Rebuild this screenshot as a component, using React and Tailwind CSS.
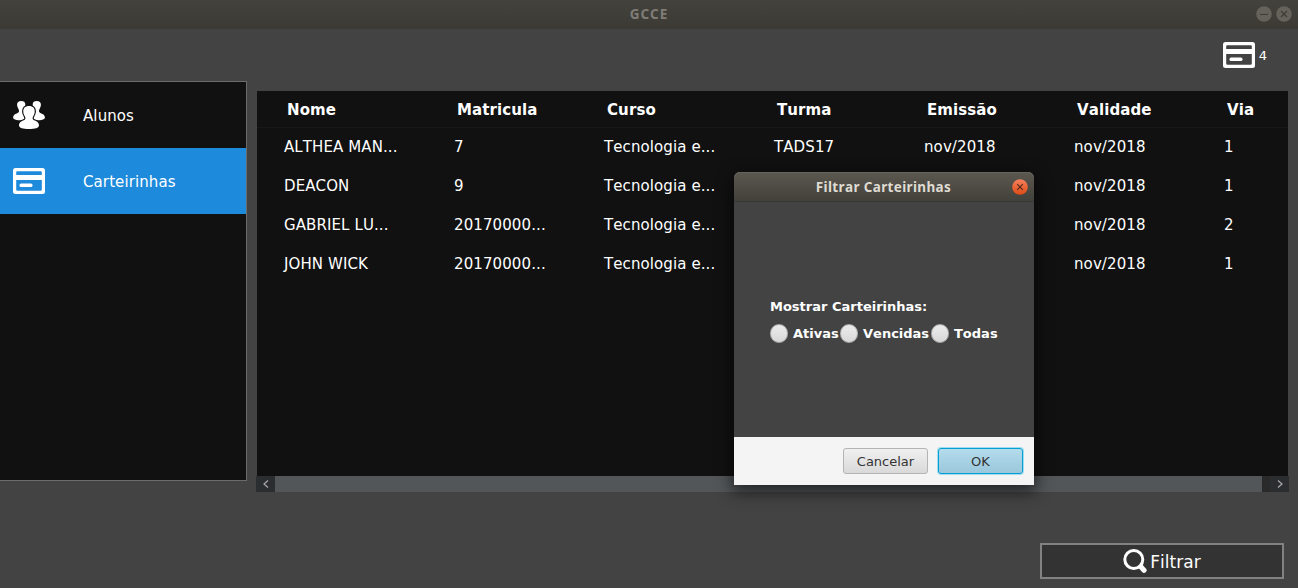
const columns = [
  { label: "Nome", width: "w-[170px]" },
  { label: "Matricula", width: "w-[150px]" },
  { label: "Curso", width: "w-[170px]" },
  { label: "Turma", width: "w-[150px]" },
  { label: "Emissão", width: "w-[150px]" },
  { label: "Validade", width: "w-[150px]" },
  { label: "Via", width: "w-[60px]" },
];

const rows = [
  ["ALTHEA MAN...", "7", "Tecnologia e...", "TADS17", "nov/2018", "nov/2018", "1"],
  ["DEACON", "9", "Tecnologia e...", "", "", "nov/2018", "1"],
  ["GABRIEL LU...", "20170000...", "Tecnologia e...", "", "", "nov/2018", "2"],
  ["JOHN WICK", "20170000...", "Tecnologia e...", "", "", "nov/2018", "1"],
];

function CardIcon() {
  return (
    <svg width="32" height="26" viewBox="0 0 32 26" className="shrink-0">
      <path
        fill="#fff"
        fillRule="evenodd"
        d="M2.5 0h27A2.5 2.5 0 0 1 32 2.5v21a2.5 2.5 0 0 1-2.5 2.5h-27A2.5 2.5 0 0 1 0 23.500v-21A2.500 2.500 0 0 1 2.500 0ZM4.200 3.300Q3.200 3.300 3.200 4.300V7H28.800V4.300Q28.800 3.300 27.800 3.300ZM3.200 12V21.500Q3.200 22.700 4.400 22.700H27.600Q28.800 22.700 28.800 21.500V12Z"
      />
      <rect x="6.500" y="15.500" width="13" height="3.500" rx="1.600" fill="#fff" />
    </svg>
  );
}

const SIDE_PERSON =
  "M8.200 0C11 0 12.600 1.300 12.300 4.300C12.200 5.500 11.900 6.300 11.400 7.200C10.800 8.400 10.800 9.600 11.800 10.600C14 12 15 13 15 15.500L13 18.500C9 19.700 3.500 19.700 0.600 17.800C-0.300 16.900 0.100 15 1.300 13.800C2.500 12.600 5.200 12.400 5.800 11C6.300 9.800 5.900 8.600 5.200 7.400C4.600 6.300 4.200 5.500 4.100 4.300C3.900 1.300 5.500 0 8.200 0Z";

const FRONT_PERSON =
  "M16 5C20 5 22 7.200 21.700 11C21.600 12.700 21 14 20.200 15.200C19.200 17 19.400 18.500 21 19.200C23.700 20.100 26 21.200 26 24.500C26 27 22 28 16 28C10 28 6 27 6 24.500C6 21.200 8.300 20.100 11 19.200C12.600 18.500 12.800 17 11.800 15.200C11 14 10.400 12.700 10.300 11C10 7.200 12 5 16 5Z";

function UsersIcon() {
  return (
    <svg width="32" height="28" viewBox="0 0 32 28" className="shrink-0" fill="#fff">
      <path d={SIDE_PERSON} />
      <path transform="matrix(-1 0 0 1 32 0)" d={SIDE_PERSON} />
      <path d={FRONT_PERSON} fill="#111" stroke="#111" strokeWidth="2.400" />
      <path d={FRONT_PERSON} />
    </svg>
  );
}

function RadioOption({ label, className }) {
  return (
    <label className={`flex items-center gap-[5px] ${className}`}>
      <span className="h-[19px] w-[18px] shrink-0 rounded-full border border-[#aaa] bg-linear-to-b from-[#ececec] to-[#d8d8d8]" />
      <span>{label}</span>
    </label>
  );
}

function FilterDialog() {
  return (
    <div className="absolute left-[734px] top-[172px] flex h-[313px] w-[300px] flex-col rounded-t-[6px] bg-[#434343] shadow-[0_5px_16px_2px_rgba(0,0,0,0.6)]">
      <div className="flex h-[30px] shrink-0 items-center rounded-t-[6px] border-b border-[#393834] bg-linear-to-b from-[#5b584f] to-[#42413b] pr-[6px] shadow-[inset_0_1px_0_#67645b]">
        <div className="flex-1 pl-[21px] pt-px text-center font-['Noto_Sans',sans-serif] text-[13.500px] font-bold tracking-[0.36px] text-[#dfdbd2]">
          Filtrar Carteirinhas
        </div>
        <svg width="16" height="16" viewBox="0 0 16 16">
          <defs>
            <linearGradient id="close" x1="0" y1="0" x2="0" y2="1">
              <stop offset="0" stopColor="#f5815d" />
              <stop offset="1" stopColor="#df4a16" />
            </linearGradient>
          </defs>
          <circle cx="8" cy="8" r="7.800" fill="url(#close)" />
          <path d="M5.200 5.200L10.800 10.800M10.800 5.200L5.200 10.800" stroke="#4a2b1e" strokeWidth="1.100" />
        </svg>
      </div>
      <div className="flex-1 pl-9 pt-[97px] text-[13px] font-bold leading-[16px] text-white">
        <div>Mostrar Carteirinhas:</div>
        <div className="mt-[9px] flex">
          <RadioOption label="Ativas" className="w-[70px]" />
          <RadioOption label="Vencidas" className="w-[91px]" />
          <RadioOption label="Todas" className="" />
        </div>
      </div>
      <div className="flex h-12 shrink-0 items-center justify-end gap-[10px] bg-[#f4f4f4] pr-[11px] text-[13px] text-[#333]">
        <button className="h-[26px] w-[85px] rounded-[3px] border border-[#b4b4b4] bg-linear-to-b from-[#f0f0f0] to-[#d9d9d9] pt-[2px]">
          Cancelar
        </button>
        <button className="h-[26px] w-[85px] rounded-[3px] border border-[#039ed3] bg-linear-to-b from-[#b3dcec] to-[#9bc7dc] pt-[2px] shadow-[0_0_0_1px_#9fdcf0]">
          OK
        </button>
      </div>
    </div>
  );
}

export default function App() {
  return (
    <div className="relative flex h-[588px] w-[1298px] flex-col overflow-hidden bg-[#434343] font-['DejaVu_Sans',sans-serif] text-[15px] text-white [font-kerning:none]">
      <header className="flex h-[29px] shrink-0 items-center bg-linear-to-b from-[#43423d] to-[#3b3a35] pr-[6px]">
        <div className="flex-1 pl-[42px] text-center font-['Noto_Sans',sans-serif] text-[13.500px] font-bold tracking-[1px] text-[#807d76]">
          GCCE
        </div>
        <svg width="36" height="16" viewBox="0 0 36 16" stroke="#3c3b37" strokeWidth="1.200" className="mb-px">
          <circle cx="8" cy="8" r="7.800" fill="#64625b" stroke="none" />
          <circle cx="28" cy="8" r="7.800" fill="#64625b" stroke="none" />
          <path d="M4 8.500H12M25 5L31 11M31 5L25 11" />
        </svg>
      </header>

      <div className="flex h-[52px] shrink-0 items-center justify-end gap-1 pr-[31px] text-[13px]">
        <CardIcon />
        <span className="pt-[2px]">4</span>
      </div>

      <div className="flex h-[411px] shrink-0">
        <nav className="h-[400px] w-[247px] shrink-0 border-y border-r border-[#6c6c6c] bg-[#111]">
          <a className="flex h-[66px] items-center gap-[38px] pl-[13px]">
            <UsersIcon />
            <span className="pt-[2px] tracking-[0.1px]">Alunos</span>
          </a>
          <a className="flex h-[66px] items-center gap-[38px] bg-[#1e8adc] pl-[13px]">
            <CardIcon />
            <span className="pt-[2px] tracking-[0.1px]">Carteirinhas</span>
          </a>
        </nav>

        <main className="ml-[9px] flex w-[1033px] flex-col pt-[10px]">
          <div className="ml-px h-[385px] w-[1031px] overflow-hidden bg-[#111] tracking-[0.1px]">
            <div className="flex h-[37px] items-center border-b border-[#181818] pl-[30px] pt-[2px] font-bold">
              {columns.map((c) => (
                <div key={c.label} className={`shrink-0 ${c.width}`}>
                  {c.label}
                </div>
              ))}
            </div>
            {rows.map((row) => (
              <div key={row[0]} className="flex h-[39px] items-center pl-[27px]">
                {row.map((cell, i) => (
                  <div key={columns[i].label} className={`shrink-0 ${columns[i].width}`}>
                    {cell}
                  </div>
                ))}
              </div>
            ))}
          </div>
          <div className="flex h-4 bg-[#2a2a2a]">
            <div className="flex w-[19px] items-center justify-center bg-[#2a2e31]">
              <svg width="6" height="8" viewBox="0 0 6 8" fill="none" stroke="#aaa" strokeWidth="1.200">
                <path d="M5 0.500L1 4L5 7.500" />
              </svg>
            </div>
            <div className="w-[987px] bg-[#525659]" />
            <div className="ml-2 flex w-[19px] items-center justify-center bg-[#2a2e31]">
              <svg width="6" height="8" viewBox="0 0 6 8" fill="none" stroke="#aaa" strokeWidth="1.200">
                <path d="M1 0.500L5 4L1 7.500" />
              </svg>
            </div>
          </div>
        </main>
      </div>

      <footer className="flex flex-1 justify-end pr-[14px] pt-[51px]">
        <button className="flex h-[36px] w-[244px] items-center justify-center gap-[3px] border-2 border-[#828282] bg-[#333] text-[17px]">
          <svg width="24" height="24" viewBox="0 0 24 24" fill="none" stroke="#fff">
            <circle cx="10.800" cy="10.500" r="9" strokeWidth="3" />
            <path d="M18 18L21 21.300" strokeWidth="5" strokeLinecap="round" />
          </svg>
          <span className="pt-[3px]">Filtrar</span>
        </button>
      </footer>

      <FilterDialog />
    </div>
  );
}
